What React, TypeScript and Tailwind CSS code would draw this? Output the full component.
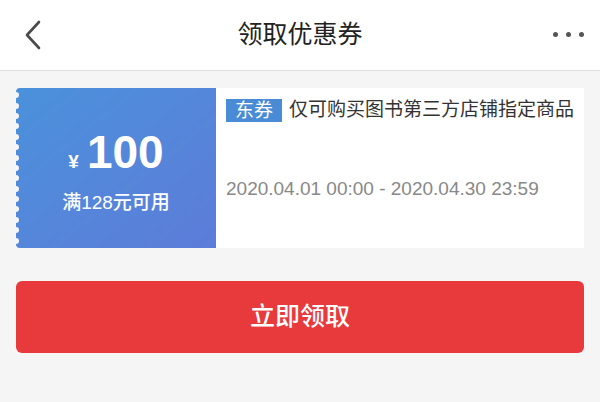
const font = {
  fontFamily: '"Liberation Sans", "Noto Sans CJK SC", sans-serif',
};

export default function App() {
  const notches = Array.from({ length: 15 });

  return (
    <div className="min-h-[402px] w-[600px] bg-[#f5f5f5]" style={font}>
      {/* header */}
      <header className="relative flex h-[71px] items-center justify-center border-b border-[#e0e0e0] bg-white">
        <button className="absolute left-[22px] top-[20px]">
          <svg width="22" height="30" viewBox="0 0 22 30" fill="none">
            <polyline
              points="17,2 5,15 17,28"
              stroke="#4a4a4a"
              strokeWidth="2.6"
              strokeLinecap="round"
              strokeLinejoin="round"
            />
          </svg>
        </button>
        <h1 className="text-[25px] text-[#222]">领取优惠券</h1>
        <div className="absolute right-[16px] top-[32px] flex gap-[8px]">
          <span className="h-[5px] w-[5px] rounded-full bg-[#555]" />
          <span className="h-[5px] w-[5px] rounded-full bg-[#555]" />
          <span className="h-[5px] w-[5px] rounded-full bg-[#555]" />
        </div>
      </header>

      <main className="px-4 pt-[17px]">
        {/* coupon */}
        <div className="flex h-[160px]">
          <div className="relative flex w-[200px] flex-col items-center justify-center rounded-l-[4px] bg-linear-to-br from-[#4a91db] to-[#5c7cd9] pt-[10px] text-white">
            <div className="absolute -left-[3px] top-0 flex h-full flex-col justify-around py-[2px]">
              {notches.map((_, i) => (
                <span key={i} className="h-[6px] w-[6px] rounded-full bg-[#f5f5f5]" />
              ))}
            </div>
            <div className="flex items-baseline font-bold">
              <span className="mr-[8px] text-[19px]">¥</span>
              <span className="text-[46px] leading-none">100</span>
            </div>
            <p className="mt-[13px] text-[19px] font-medium">满128元可用</p>
          </div>
          <div className="flex-1 bg-white pl-[10px] pr-2 pt-[8px]">
            <div className="flex items-center gap-[7px]">
              <span className="bg-[#4a8bd6] px-[9px] text-[19px] leading-[23px] text-white">
                东券
              </span>
              <span className="text-[19px] text-[#333]">仅可购买图书第三方店铺指定商品</span>
            </div>
            <p className="mt-[50px] text-[19px] text-[#888]">
              2020.04.01 00:00 - 2020.04.30 23:59
            </p>
          </div>
        </div>

        <button className="mt-[33px] flex h-[72px] w-full items-center justify-center rounded-[6px] bg-[#e8393c] text-[25px] font-medium text-white">
          立即领取
        </button>
      </main>
    </div>
  );
}
